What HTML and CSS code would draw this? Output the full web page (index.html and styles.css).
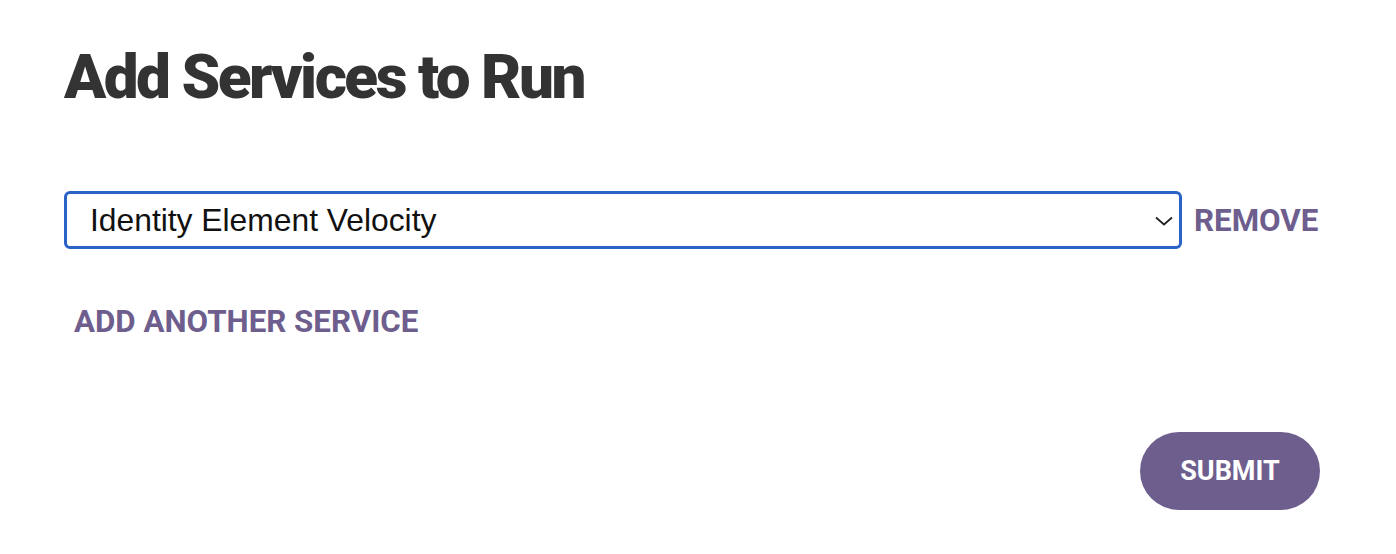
FILE: index.html
```html
<!DOCTYPE html>
<html>
<head>
<meta charset="utf-8">
<link rel="stylesheet" href="styles.css">
</head>
<body>
<div class="page">
  <h1 class="title">Add Services to Run</h1>
  <div class="service-row">
    <div class="select">
      <span class="select-value">Identity Element Velocity</span>
      <svg class="chevron" width="18" height="10" viewBox="0 0 18 10"><path d="M1 1.5 L9 8.5 L17 1.5" fill="none" stroke="#222" stroke-width="1.7"/></svg>
    </div>
    <button class="link-btn remove">REMOVE</button>
  </div>
  <button class="link-btn add">ADD ANOTHER SERVICE</button>
  <div class="actions">
    <button class="submit">SUBMIT</button>
  </div>
</div>
</body>
</html>
```
FILE: styles.css
```css
* { box-sizing: border-box; }
body {
  margin: 0;
  background: #fff;
  font-family: Roboto, "Liberation Sans", sans-serif;
}
.page {
  width: 1396px;
  height: 554px;
  padding: 40px 76px 0 64px;
  display: flex;
  flex-direction: column;
}
.title {
  margin: 0;
  font-size: 62px;
  font-weight: 900;
  color: #333333;
  line-height: 74px;
  letter-spacing: -2.5px;
}
.service-row {
  margin-top: 77px;
  display: flex;
  align-items: center;
  gap: 12px;
}
.select {
  width: 1118px;
  height: 58px;
  border: 3px solid #2b62c6;
  border-radius: 6px;
  display: flex;
  align-items: center;
  justify-content: space-between;
  padding: 0 6px 0 23px;
}
.select-value {
  font-family: "Liberation Sans", Arial, sans-serif;
  font-size: 31.8px;
  color: #111;
}
.chevron { margin-top: 1px; }
.link-btn {
  background: none;
  border: none;
  padding: 0;
  font-family: Roboto, sans-serif;
  font-weight: 700;
  color: #6e5e8e;
  cursor: pointer;
}
.remove { font-size: 31.3px; }
.add {
  align-self: flex-start;
  margin: 54px 0 0 10px;
  font-size: 31.3px;
}
.actions {
  margin-top: 92px;
  display: flex;
  justify-content: flex-end;
}
.submit {
  width: 180px;
  height: 78px;
  border: none;
  border-radius: 39px;
  background: #6e5e8e;
  color: #fff;
  font-family: Roboto, sans-serif;
  font-weight: 700;
  font-size: 27px;
}
```
